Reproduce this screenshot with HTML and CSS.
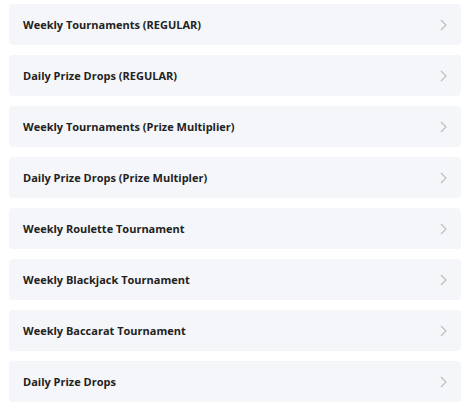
FILE: index.html
```html
<!DOCTYPE html>
<html lang="en">
<head>
    <meta charset="UTF-8">
    <title>Promotions</title>
    <link rel="stylesheet" href="styles.css">
</head>
<body>
    <ul class="promo-list">
        <li class="promo-item"><span>Weekly Tournaments (REGULAR)</span><svg class="chevron" viewBox="0 0 7 12"><path d="M1 1l5 5-5 5"/></svg></li>
        <li class="promo-item"><span>Daily Prize Drops (REGULAR)</span><svg class="chevron" viewBox="0 0 7 12"><path d="M1 1l5 5-5 5"/></svg></li>
        <li class="promo-item"><span>Weekly Tournaments (Prize Multiplier)</span><svg class="chevron" viewBox="0 0 7 12"><path d="M1 1l5 5-5 5"/></svg></li>
        <li class="promo-item"><span>Daily Prize Drops (Prize Multipler)</span><svg class="chevron" viewBox="0 0 7 12"><path d="M1 1l5 5-5 5"/></svg></li>
        <li class="promo-item"><span>Weekly Roulette Tournament</span><svg class="chevron" viewBox="0 0 7 12"><path d="M1 1l5 5-5 5"/></svg></li>
        <li class="promo-item"><span>Weekly Blackjack Tournament</span><svg class="chevron" viewBox="0 0 7 12"><path d="M1 1l5 5-5 5"/></svg></li>
        <li class="promo-item"><span>Weekly Baccarat Tournament</span><svg class="chevron" viewBox="0 0 7 12"><path d="M1 1l5 5-5 5"/></svg></li>
        <li class="promo-item"><span>Daily Prize Drops</span><svg class="chevron" viewBox="0 0 7 12"><path d="M1 1l5 5-5 5"/></svg></li>
    </ul>
</body>
</html>
```
FILE: styles.css
```css
body {
    margin: 0;
    background: #fff;
    font-family: "Open Sans", Arial, sans-serif;
}
.promo-list {
    list-style: none;
    margin: 0;
    padding: 4px 13px 0 9px;
    display: flex;
    flex-direction: column;
    gap: 10px;
}
.promo-item {
    height: 41px;
    display: flex;
    align-items: center;
    justify-content: space-between;
    padding: 0 14px 0 14px;
    background-color: #f5f6f9;
    border-radius: 4px;
    font-size: 11px;
    font-weight: 700;
    color: #222;
}
.chevron {
    width: 7px;
    height: 12px;
    fill: none;
    stroke: #bbb;
    stroke-width: 1.1;
}
```
